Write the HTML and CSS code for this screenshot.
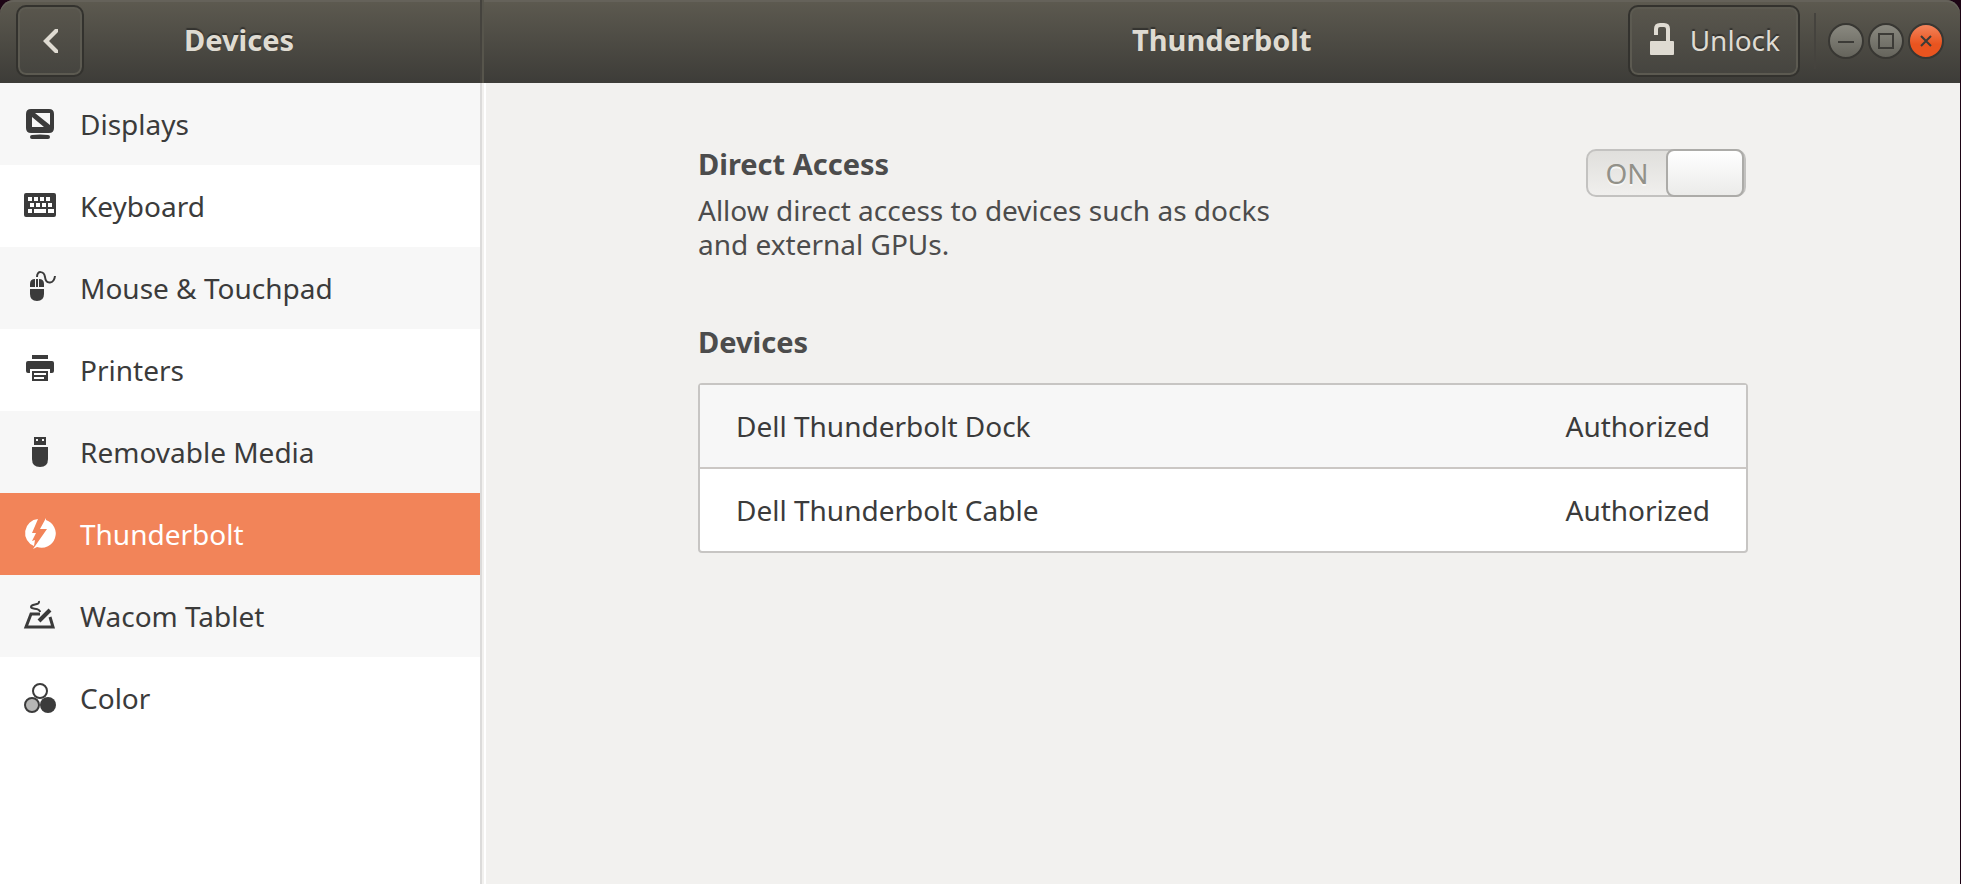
FILE: index.html
```html
<!DOCTYPE html>
<html lang="en">

<head>
    <meta charset="UTF-8">
    <meta name="viewport" content="width=device-width, initial-scale=1.0">
    <title>Thunderbolt</title>
    <link rel="stylesheet" href="styles.css">
</head>

<body>
    <div class="window">
        <!-- Title bar -->
        <header class="titlebar">
            <div class="titlebar-side">
                <button class="bar-button back" aria-label="Back">
                    <svg width="32" height="32" viewBox="0 0 32 32"><path d="M24 5 V8 L15 17 L24 26 V29 H21 L9 17 L21 5 Z" fill="#dfdbd2"/></svg>
                </button>
                <h1>Devices</h1>
            </div>
            <div class="titlebar-main">
                <h1>Thunderbolt</h1>
                <button class="bar-button unlock">
                    <svg width="32" height="32" viewBox="0 0 32 32">
                        <path d="M8 11 V5 Q8 1 12 1 H16 Q20 1 20 5 V18" fill="none" stroke="#dfdbd2" stroke-width="4"/>
                        <rect x="2" y="17" width="24" height="14" rx="1" fill="#dfdbd2"/>
                    </svg>
                    Unlock
                </button>
                <div class="window-buttons">
                    <button class="round" aria-label="Minimize">
                        <svg width="32" height="32" viewBox="0 0 32 32"><path d="M8 17 H24" stroke="#3c3b37" stroke-width="2"/></svg>
                    </button>
                    <button class="round" aria-label="Maximize">
                        <svg width="32" height="32" viewBox="0 0 32 32"><rect x="9" y="9" width="14" height="14" fill="none" stroke="#3c3b37" stroke-width="2"/></svg>
                    </button>
                    <button class="round close" aria-label="Close">
                        <svg width="32" height="32" viewBox="0 0 32 32"><path d="M11 11 L21 21 M21 11 L11 21" stroke="#3c3b37" stroke-width="2"/></svg>
                    </button>
                </div>
            </div>
        </header>

        <div class="content">
            <!-- Sidebar -->
            <nav class="sidebar">
                <a href="#">
                    <svg viewBox="0 0 32 32">
                        <path fill-rule="evenodd" d="M7 1 H25 Q30 1 30 6 V20 Q30 25 25 25 H7 Q2 25 2 20 V6 Q2 1 7 1 Z M11 5 H26 V17 Z M8 9 V19 H20 Z"/>
                        <path d="M8 27 Q16 26 24 27 Q26 27 26 29 Q26 31 24 31 H8 Q6 31 6 29 Q6 27 8 27 Z"/>
                    </svg>
                    Displays
                </a>
                <a href="#">
                    <svg viewBox="0 0 32 32">
                        <path fill-rule="evenodd" d="M2 3 H30 Q32 3 32 5 V25 Q32 27 30 27 H2 Q0 27 0 25 V5 Q0 3 2 3 Z M4 7 v4 h4 v-4 Z M10 7 v4 h4 v-4 Z M16 7 v4 h4 v-4 Z M22 7 v4 h4 v-4 Z M6 13 v4 h4 v-4 Z M12 13 v4 h4 v-4 Z M18 13 v4 h4 v-4 Z M24 13 v4 h4 v-4 Z M4 19 v4 h4 v-4 Z M10 19 v4 h12 v-4 Z M24 19 v4 h6 v-4 Z"/>
                    </svg>
                    Keyboard
                </a>
                <a href="#">
                    <svg viewBox="0 0 32 32">
                        <path d="M11 7 V15 H6 V12 Q6 7 11 7 Z M15 7 Q20 7 20 12 V15 H15 Z M12 7 h2 v8 h-2 Z M6 17 H20 V22 Q20 29 13 29 Q6 29 6 22 Z"/>
                        <path d="M13 5 C13 -2 20 -1 21 5 C22 13 30 12 31 4" fill="none" stroke="currentColor" stroke-width="2"/>
                    </svg>
                    Mouse &amp; Touchpad
                </a>
                <a href="#">
                    <svg viewBox="0 0 32 32">
                        <path d="M8 1 H24 V5 H8 Z M4 7 H28 Q30 7 30 9 V17 Q30 19 28 19 H26 V15 H6 V19 H4 Q2 19 2 17 V9 Q2 7 4 7 Z"/>
                        <path fill-rule="evenodd" d="M8 17 H24 V27 H8 Z M10 19 V21 H22 V19 Z M10 23 V25 H20 V23 Z"/>
                    </svg>
                    Printers
                </a>
                <a href="#">
                    <svg viewBox="0 0 32 32">
                        <path fill-rule="evenodd" d="M10 1 H22 V9 H10 Z M12 3 v2 h2 v-2 Z M18 3 v2 h2 v-2 Z"/>
                        <path d="M8 11 H24 V23 Q24 31 16 31 Q8 31 8 23 Z"/>
                    </svg>
                    Removable Media
                </a>
                <a href="#" class="selected" aria-current="page">
                    <svg viewBox="0 0 32 32">
                        <path d="M14 1 A14 14 0 0 0 10 28 L11 22 L8 23 L12 15 H8 Z"/>
                        <path d="M22 0 L16 11 H23 L9 31 L13 29 A14 14 0 0 0 22 2 Z"/>
                    </svg>
                    Thunderbolt
                </a>
                <a href="#">
                    <svg viewBox="0 0 32 32">
                        <path d="M16 14 H7 L2 27 H29 L26 17" fill="none" stroke="currentColor" stroke-width="3"/>
                        <path d="M15 21 L26 10" stroke="currentColor" stroke-width="4"/>
                        <path d="M15 1 C16 6 7 3 7 7 C7 10 16 7 16 12" fill="none" stroke="currentColor" stroke-width="2"/>
                    </svg>
                    Wacom Tablet
                </a>
                <a href="#">
                    <svg viewBox="0 0 32 32">
                        <circle cx="16" cy="9" r="7" fill="#fff" stroke="currentColor" stroke-width="2"/>
                        <circle cx="8" cy="23" r="7" fill="#b6b6b5" stroke="currentColor" stroke-width="2"/>
                        <circle cx="24" cy="23" r="8"/>
                    </svg>
                    Color
                </a>
            </nav>

            <!-- Thunderbolt panel -->
            <main class="panel">
                <div class="panel-inner">
                    <div class="direct-access">
                        <div>
                            <h2 id="direct-title">Direct Access</h2>
                            <p>Allow direct access to devices such as docks<br>and external GPUs.</p>
                        </div>
                        <label class="switch">
                            <input type="checkbox" role="switch" aria-labelledby="direct-title" checked>
                            <span class="switch-text">ON</span>
                            <span class="switch-knob"></span>
                        </label>
                    </div>

                    <h2>Devices</h2>
                    <ul class="devices">
                        <li><span>Dell Thunderbolt Dock</span><span>Authorized</span></li>
                        <li><span>Dell Thunderbolt Cable</span><span>Authorized</span></li>
                    </ul>
                </div>
            </main>
        </div>
    </div>
</body>

</html>
```

FILE: styles.css
```css
* {
    box-sizing: border-box;
}

body {
    margin: 0;
    background-color: #1d0515;
    font-family: "Noto Sans", "Open Sans", sans-serif;
    font-size: 28px;
    line-height: 34px;
    color: #3b3b3b;
}

h1,
h2,
p,
ul {
    margin: 0;
    padding: 0;
}

h1,
h2 {
    font-size: 29px;
    line-height: 34px;
}

.window {
    display: flex;
    flex-direction: column;
    min-height: 100vh;
    margin-right: 1px;
}

/* Title bar */
.titlebar {
    display: flex;
    height: 83px;
    background: linear-gradient(#5d5a50, #3d3c38);
    border-radius: 14px 14px 0 0;
    box-shadow: inset 0 2px #65625a;
    color: #dfdbd2;
}

.titlebar h1 {
    flex: 1;
    padding-bottom: 2px;
    text-align: center;
    text-shadow: 0 -2px 1px #33322f;
}

.titlebar-side {
    display: flex;
    align-items: center;
    width: 482px;
    padding: 0 86px 2px 16px;
    border-right: 2px solid #45433e;
}

.titlebar-main {
    flex: 1;
    display: flex;
    align-items: center;
    padding: 0 16px 2px 0;
    border-left: 2px solid #57554c;
}

.titlebar-main h1 {
    padding-left: 332px;
}

.bar-button {
    display: flex;
    align-items: center;
    justify-content: center;
    height: 72px;
    padding: 0 18px 2px;
    border: 2px solid #33322e;
    border-radius: 10px;
    background: linear-gradient(#59564d, #45443f);
    box-shadow: inset 0 0 0 2px #5c5a51;
    color: #dfdbd2;
    font: inherit;
    text-shadow: 0 -2px 1px #33322f;
}

.back {
    width: 68px;
    padding: 0 0 2px;
}

.unlock {
    gap: 10px;
}

.unlock svg {
    overflow: visible;
}

.window-buttons {
    display: flex;
    gap: 4px;
    margin-left: 14px;
    padding: 10px 0 10px 12px;
    border-left: 2px solid #45433e;
}

.round {
    display: flex;
    align-items: center;
    justify-content: center;
    width: 36px;
    height: 36px;
    padding: 0;
    border: 2px solid #383733;
    border-radius: 50%;
    background: linear-gradient(#8a8980, #65645c);
}

.round.close {
    background: linear-gradient(#f4845c, #e9541f 60%);
}

.content {
    flex: 1;
    display: flex;
}

/* Sidebar */
.sidebar {
    width: 482px;
    background-color: #fff;
    border-right: 2px solid #dcdbda;
}

.sidebar a {
    display: flex;
    align-items: center;
    gap: 24px;
    height: 82px;
    padding-left: 24px;
    color: #3b3b3b;
    text-decoration: none;
}

.sidebar a:nth-child(odd) {
    background-color: #f7f7f7;
}

.sidebar a.selected {
    background-color: #f28459;
    color: #fff;
}

.sidebar svg {
    width: 32px;
    height: 32px;
    fill: currentColor;
    overflow: visible;
}

/* Panel */
.panel {
    flex: 1;
    padding: 64px 32px 64px 34px;
    background-color: #f2f1ef;
    border-left: 2px solid #f2f1ef;
    box-shadow: inset 2px 0 #fff;
}

.panel-inner {
    max-width: 1050px;
    margin: 0 auto;
    color: #4c4c4c;
}

.direct-access {
    display: flex;
    justify-content: space-between;
    align-items: flex-start;
    margin-bottom: 64px;
    padding-right: 2px;
}

.direct-access p {
    margin-top: 12px;
}

/* Switch */
.switch {
    position: relative;
    display: flex;
    width: 160px;
    height: 48px;
    margin-top: 2px;
    border: 2px solid #c3c2c0;
    border-radius: 10px;
    background: linear-gradient(#e0dfdc, #f0efed);
    color: #929189;
}

.switch input {
    position: absolute;
    inset: 0;
    margin: 0;
    opacity: 0;
}

.switch-text {
    flex: 1;
    line-height: 44px;
    text-align: center;
    text-shadow: 0 2px #f7f7f6;
}

.switch-knob {
    width: 78px;
    margin: -2px 0;
    border: 2px solid #acaba8;
    border-radius: 8px;
    background: linear-gradient(#fff, #ebebe9);
}

/* Device list */
.devices {
    margin-top: 24px;
    border: 2px solid #c7c5c3;
    border-radius: 4px;
    background-color: #fff;
    color: #3b3b3b;
    list-style: none;
}

.devices li {
    display: flex;
    align-items: center;
    justify-content: space-between;
    height: 82px;
    padding: 0 36px;
}

.devices li:first-child {
    height: 84px;
    background-color: #f7f7f7;
    border-bottom: 2px solid #cbc7c4;
}
```
